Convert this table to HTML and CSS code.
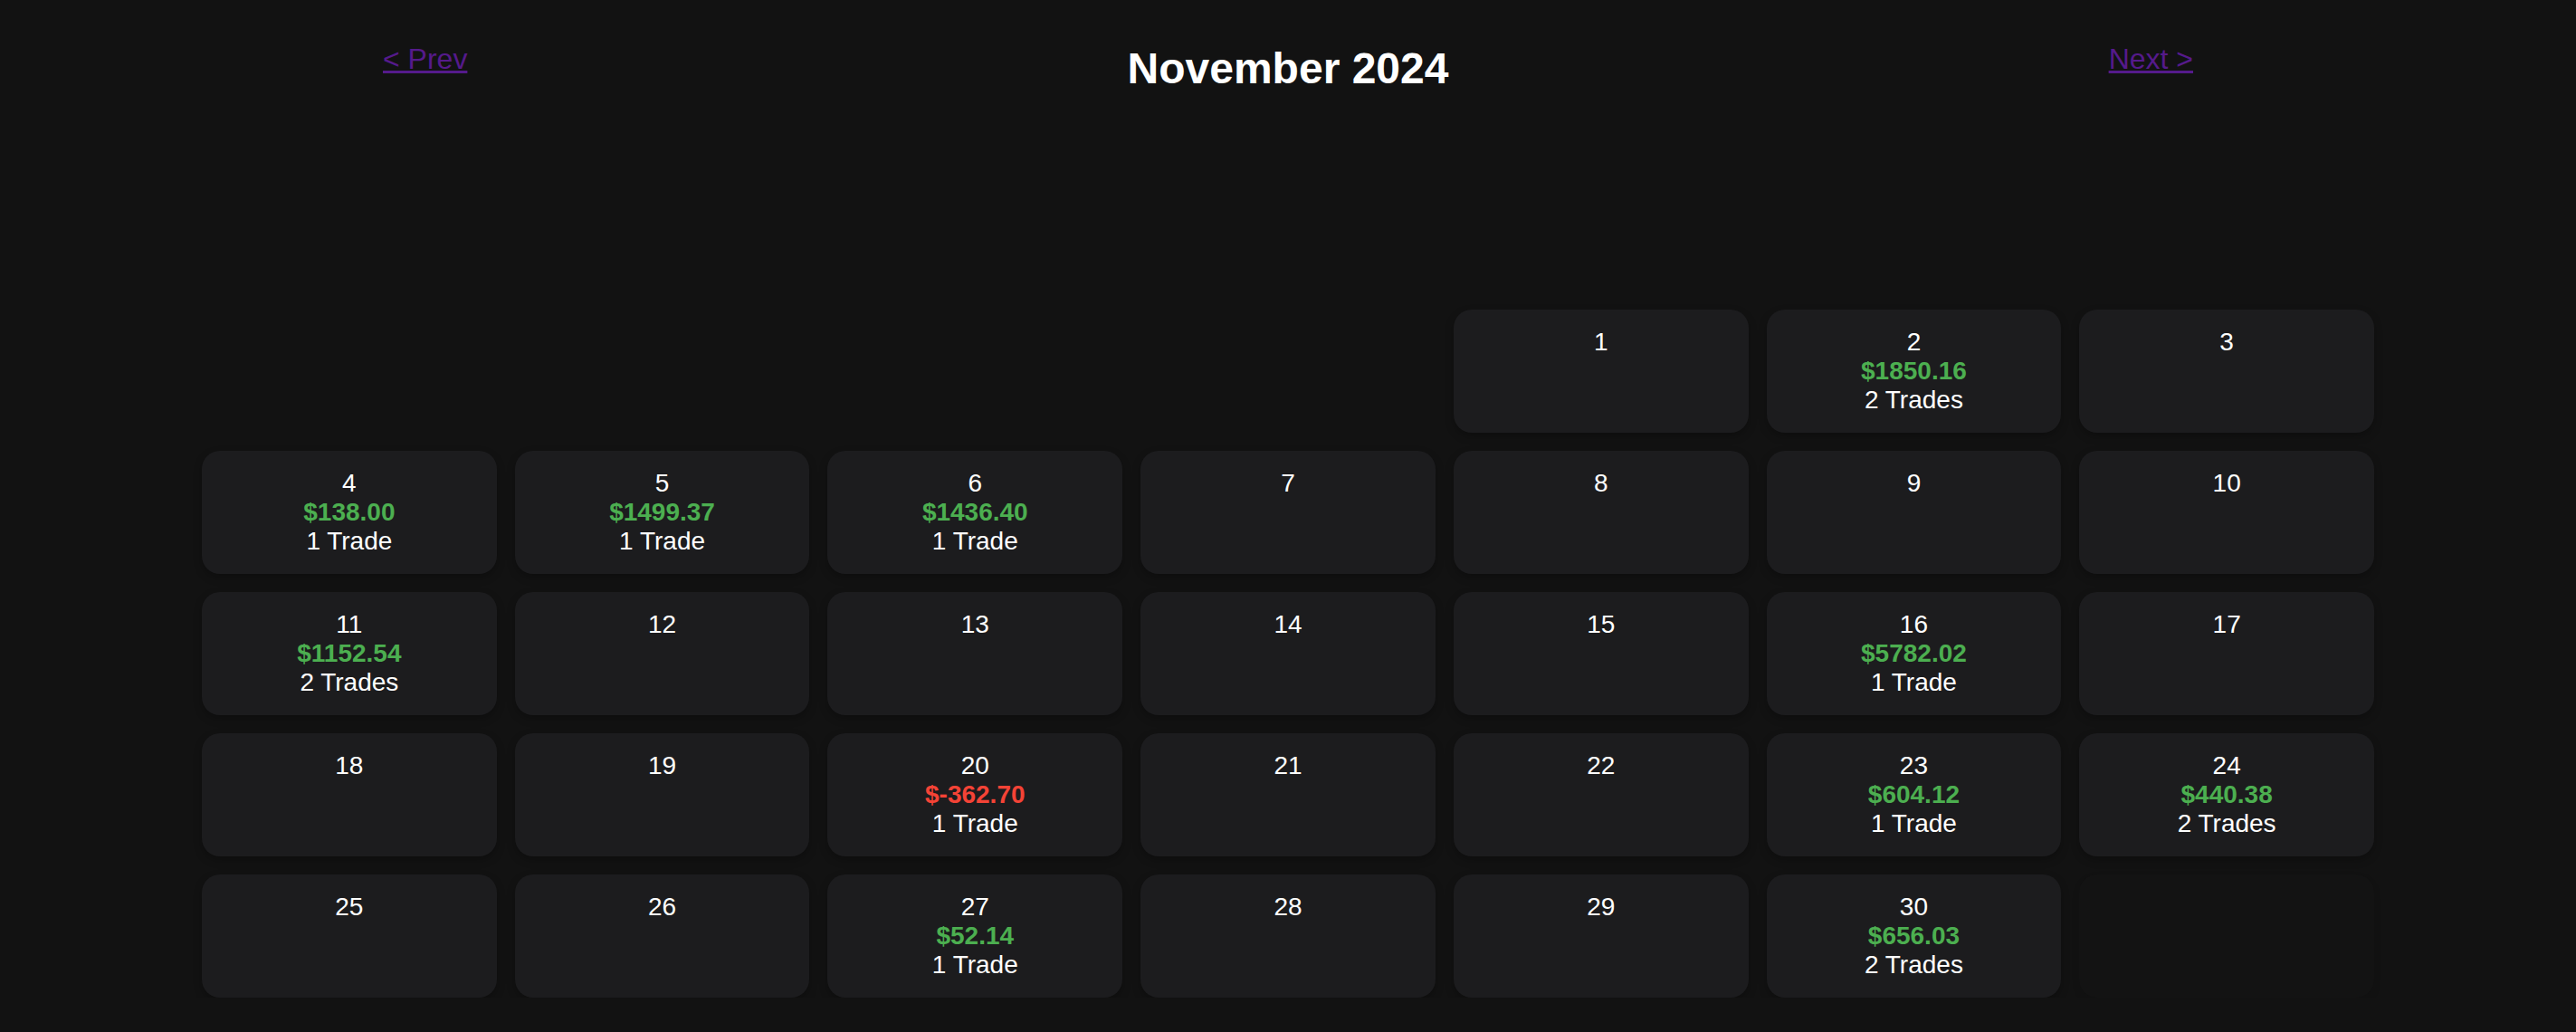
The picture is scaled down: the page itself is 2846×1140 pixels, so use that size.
FILE: index.html
```html
<!DOCTYPE html>
<html lang="en">
<head>
<meta charset="utf-8">
<title>November 2024</title>
<link rel="stylesheet" href="styles.css">
</head>
<body>
<div class="header">
  <a class="nav" href="#">&lt; Prev</a>
  <h2 class="title">November 2024</h2>
  <a class="nav" href="#">Next &gt;</a>
</div>
<div class="grid">
  <div class="cell blank"></div>
  <div class="cell blank"></div>
  <div class="cell blank"></div>
  <div class="cell blank"></div>
  <div class="cell"><div class="day">1</div></div>
  <div class="cell"><div class="day">2</div><div class="pnl pos">$1850.16</div><div class="trades">2 Trades</div></div>
  <div class="cell"><div class="day">3</div></div>

  <div class="cell"><div class="day">4</div><div class="pnl pos">$138.00</div><div class="trades">1 Trade</div></div>
  <div class="cell"><div class="day">5</div><div class="pnl pos">$1499.37</div><div class="trades">1 Trade</div></div>
  <div class="cell"><div class="day">6</div><div class="pnl pos">$1436.40</div><div class="trades">1 Trade</div></div>
  <div class="cell"><div class="day">7</div></div>
  <div class="cell"><div class="day">8</div></div>
  <div class="cell"><div class="day">9</div></div>
  <div class="cell"><div class="day">10</div></div>

  <div class="cell"><div class="day">11</div><div class="pnl pos">$1152.54</div><div class="trades">2 Trades</div></div>
  <div class="cell"><div class="day">12</div></div>
  <div class="cell"><div class="day">13</div></div>
  <div class="cell"><div class="day">14</div></div>
  <div class="cell"><div class="day">15</div></div>
  <div class="cell"><div class="day">16</div><div class="pnl pos">$5782.02</div><div class="trades">1 Trade</div></div>
  <div class="cell"><div class="day">17</div></div>

  <div class="cell"><div class="day">18</div></div>
  <div class="cell"><div class="day">19</div></div>
  <div class="cell"><div class="day">20</div><div class="pnl neg">$-362.70</div><div class="trades">1 Trade</div></div>
  <div class="cell"><div class="day">21</div></div>
  <div class="cell"><div class="day">22</div></div>
  <div class="cell"><div class="day">23</div><div class="pnl pos">$604.12</div><div class="trades">1 Trade</div></div>
  <div class="cell"><div class="day">24</div><div class="pnl pos">$440.38</div><div class="trades">2 Trades</div></div>

  <div class="cell"><div class="day">25</div></div>
  <div class="cell"><div class="day">26</div></div>
  <div class="cell"><div class="day">27</div><div class="pnl pos">$52.14</div><div class="trades">1 Trade</div></div>
  <div class="cell"><div class="day">28</div></div>
  <div class="cell"><div class="day">29</div></div>
  <div class="cell"><div class="day">30</div><div class="pnl pos">$656.03</div><div class="trades">2 Trades</div></div>
  <div class="cell empty"></div>
</div>
</body>
</html>
```
FILE: styles.css
```css
html, body {
  margin: 0;
  padding: 0;
  background: #121212;
}

body {
  font-family: "Liberation Sans", Arial, Helvetica, sans-serif;
  color: #ffffff;
}

.header {
  width: 2000px;
  margin: 0 auto;
  padding-top: 47px;
  display: flex;
  justify-content: space-between;
  align-items: flex-start;
}

.title {
  margin: 0;
  margin-top: 1px;
  font-size: 48px;
  font-weight: bold;
  line-height: 55px;
  color: #ffffff;
}

.nav {
  font-size: 32px;
  line-height: 37px;
  color: #551a8b;
  text-decoration: underline;
}

.grid {
  width: 2400px;
  margin: 239px auto 0;
  display: grid;
  grid-template-columns: repeat(7, 1fr);
  grid-auto-rows: 136px;
  gap: 20px;
}

.cell {
  background: #1c1c1e;
  border-radius: 20px;
  padding-top: 20px;
  text-align: center;
  font-size: 28px;
  line-height: 32px;
  box-shadow: 0 4px 10px rgba(0, 0, 0, 0.25);
  box-sizing: border-box;
}

.cell.blank {
  background: transparent;
  box-shadow: none;
}

.cell.empty {
  background: #131313;
  box-shadow: 0 4px 10px rgba(0, 0, 0, 0.08);
}

.day {
  color: #ffffff;
}

.pnl {
  font-weight: bold;
}

.pos {
  color: #4caf50;
}

.neg {
  color: #f44336;
}

.trades {
  color: #ffffff;
}
```
